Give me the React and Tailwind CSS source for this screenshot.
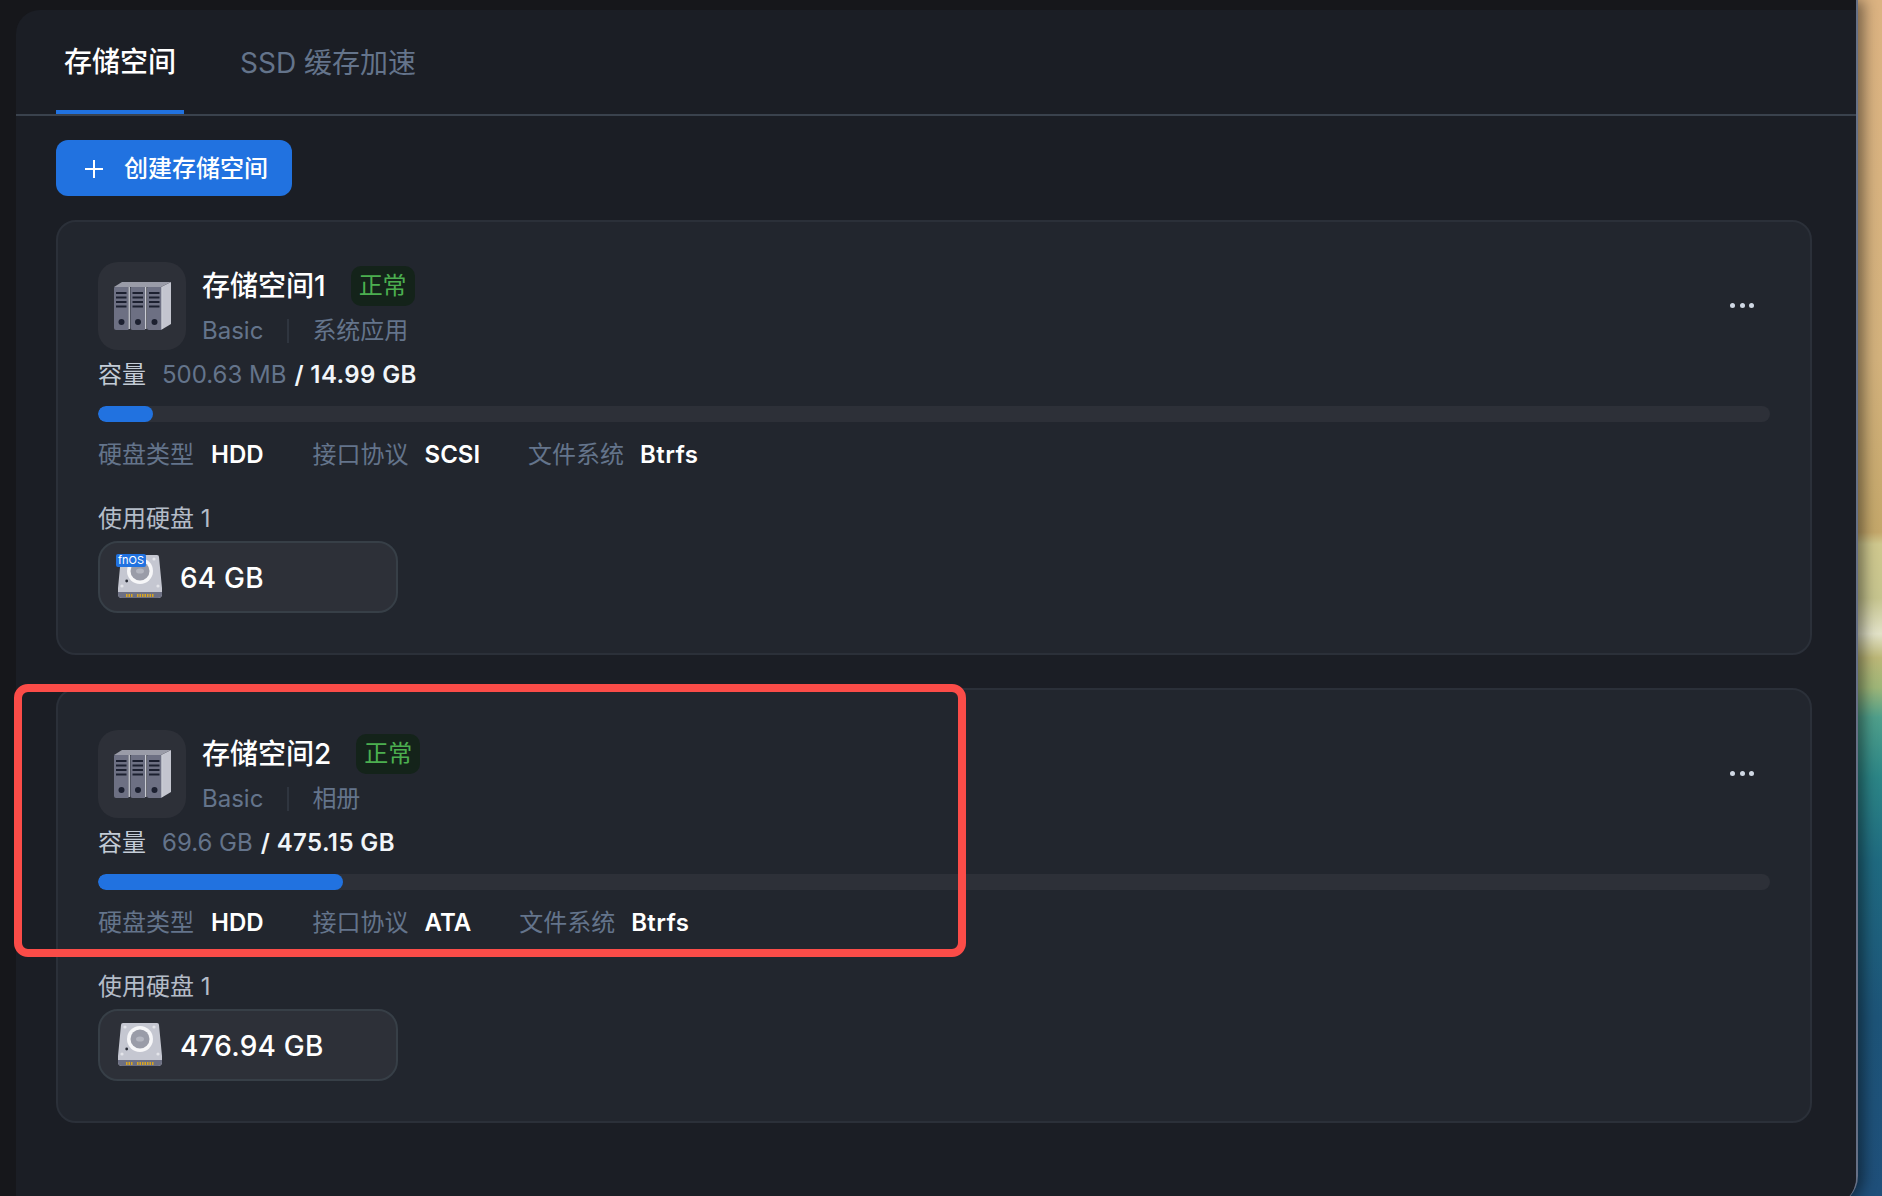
import React from 'react';

const spaces = [
  {
    name: '存储空间1',
    tag: '系统应用',
    used: '500.63 MB',
    total: '14.99 GB',
    percent: 3.3,
    protocol: 'SCSI',
    disk: '64 GB',
    fnos: true,
  },
  {
    name: '存储空间2',
    tag: '相册',
    used: '69.6 GB',
    total: '475.15 GB',
    percent: 14.65,
    protocol: 'ATA',
    disk: '476.94 GB',
    fnos: false,
  },
];

const VolumeIcon = () => (
  <svg width="60" height="52" viewBox="0 0 60 52">
    <path d="M48 6 L58 1 V43 L48 49 Z" fill="#c3c5cf" />
    <path d="M1 6 L9 1 H58 L48 6 Z" fill="#9a9ca8" />
    {[0, 16.5, 33].map((x) => (
      <g key={x} transform={`translate(${x} 0)`}>
        <path d="M2 6 H15.5 V49 H3 Q1 49 1 47 V7 Q1 6 2 6 Z" fill="#6d7083" />
        <rect x="15.5" y="6" width="1.4" height="42" fill="#c9cbd3" />
        <rect x="3" y="11" width="10.5" height="2" fill="#1c2030" />
        <rect x="3" y="15.5" width="10.5" height="2" fill="#1c2030" />
        <rect x="3" y="20" width="10.5" height="2" fill="#1c2030" />
        <rect x="3" y="24.5" width="10.5" height="2" fill="#1c2030" />
        <circle cx="8.5" cy="41" r="3" fill="#1c2030" />
      </g>
    ))}
  </svg>
);

const DiskIcon = () => (
  <svg width="44" height="44" viewBox="0 0 44 44">
    <path d="M5 0 H39 Q41 0 41 2 L44 33 V39 Q44 43 40 43 H4 Q0 43 0 39 V33 L3 2 Q3 0 5 0 Z" fill="#c5c7d1" />
    <path d="M0 37 H44 V39 Q44 43 40 43 H4 Q0 43 0 39 Z" fill="#6d7083" />
    <circle cx="22" cy="16" r="13" fill="#f6f6f8" />
    <circle cx="22" cy="16" r="9.5" fill="#9a9ca8" />
    <ellipse cx="22" cy="16" rx="4" ry="2.6" fill="#b4b6c0" />
    <circle cx="8.7" cy="26" r="1.4" fill="#2a2d38" />
    {[[7, 4], [36, 4], [4, 31], [40, 31]].map(([cx, cy]) => (
      <circle key={cx} cx={cx} cy={cy} r="1.6" fill="#e4e5ea" />
    ))}
    {[8, 10.5, 13, 19, 21.5, 24, 26.5, 29, 31.5, 34].map((x) => (
      <rect key={x} x={x} y="39" width="1.5" height="3" fill="#d9a521" />
    ))}
  </svg>
);

const StorageCard = ({ space }) => (
  <div className="h-[435px] rounded-[20px] border-2 border-[#2b3039] bg-[#22262e] pt-[40px] pl-[40px] pr-[40px]">
    <div className="flex items-center justify-between h-[88px]">
      <div className="flex items-center">
        <div className="w-[88px] h-[88px] rounded-[20px] bg-[#2d3038] flex items-center justify-center pt-[2px] pl-[2px]">
          <VolumeIcon />
        </div>
        <div className="ml-[16px]">
          <div className="flex items-center h-[40px] mt-[2px]">
            <span className="text-[28px] font-medium text-white">{space.name}</span>
            <span className="ml-[25px] w-[64px] h-[40px] rounded-[10px] bg-[#14231a] text-[#4caf50] text-[24px] flex items-center justify-center">
              正常
            </span>
          </div>
          <div className="flex items-center h-[34px] mt-[8px] text-[24px] text-[#64748b]">
            <span>Basic</span>
            <span className="w-[2px] h-[24px] bg-[#2f353f] ml-[24px] mr-[23px]" />
            <span>{space.tag}</span>
          </div>
        </div>
      </div>
      <div className="flex gap-[4.5px] mr-[16px] mt-[-2px]">
        <span className="w-[5px] h-[5px] rounded-full bg-[#d0d8e4]" />
        <span className="w-[5px] h-[5px] rounded-full bg-[#d0d8e4]" />
        <span className="w-[5px] h-[5px] rounded-full bg-[#d0d8e4]" />
      </div>
    </div>

    <div className="flex items-center h-[34px] mt-[8px] text-[24px]">
      <span className="text-[#c3cbd6] mr-[16px]">容量</span>
      <span className="text-[#64748b]">{space.used}</span>
      <span className="text-[#f1f5f9] font-semibold ml-[8px] tracking-[0.4px]">/ {space.total}</span>
    </div>

    <div className="h-[16px] mt-[14px] rounded-[8px] bg-[#2d3038] overflow-hidden">
      <div className="h-full rounded-[8px] bg-[#2172e0]" style={{ width: `${space.percent}%` }} />
    </div>

    <div className="flex items-center h-[34px] mt-[16px] text-[24px]">
      <span className="text-[#64748b] mr-[17px]">硬盘类型</span>
      <span className="text-white font-semibold mr-[49px]">HDD</span>
      <span className="text-[#64748b] mr-[16px]">接口协议</span>
      <span className="text-white font-semibold mr-[48px]">{space.protocol}</span>
      <span className="text-[#64748b] mr-[16px]">文件系统</span>
      <span className="text-white font-semibold tracking-[0.4px]">Btrfs</span>
    </div>

    <div className="h-[34px] mt-[30px] flex items-center text-[24px] text-[#b4bcc8]">使用硬盘 1</div>

    <div className="relative w-[300px] h-[72px] mt-[5px] rounded-[20px] border-2 border-[#373f47] bg-[#2d3038] flex items-center pl-[18px]">
      <DiskIcon />
      {space.fnos && (
        <span className="absolute left-[16px] top-[11px] h-[13px] w-[30px] rounded-[2px] bg-[#2172e0] text-white text-[11px] leading-[13px] text-center">
          fnOS
        </span>
      )}
      <span className="ml-[18px] pt-[2px] text-[28px] font-medium text-white tracking-[0.2px]">{space.disk}</span>
    </div>
  </div>
);

const App = () => {
  return (
    <div
      className="relative h-[1196px] overflow-hidden bg-[linear-gradient(180deg,#dcb382_0%,#d2b17c_30%,#c4a76a_44.5%,#cfc88e_45.5%,#c6c48e_50%,#e2e2c8_53%,#bcb777_55%,#9eb678_57.5%,#4f9f8b_60%,#2c8586_65%,#1f6a80_72%,#1d5478_85%,#1f4f7a_100%)]"
      style={{ fontFamily: 'Inter, "Noto Sans CJK SC", sans-serif' }}
    >
      <div className="w-[1858px] h-[1206px] pt-[10px] pl-[16px] bg-[#16171b] rounded-br-[30px] border-r-2 border-[#667085] shadow-[6px_0_14px_rgba(0,0,0,0.45)]">
        <div className="h-full rounded-tl-[24px] rounded-br-[28px] bg-[#1b1e25]">
          {/* Tabs */}
          <div className="flex h-[106px] px-[40px] border-b-2 border-[#3a424d]">
            <div className="w-[128px] h-[104px] border-b-4 border-[#2172e0] flex items-center justify-center text-[28px] font-medium text-white pt-[4px]">
              存储空间
            </div>
            <div className="h-[104px] ml-[56px] flex items-center text-[28px] text-[#64748b] pt-[2px]">
              SSD 缓存加速
            </div>
          </div>

          <div className="pl-[40px] pr-[44px] pt-[24px]">
            <button className="w-[236px] h-[56px] rounded-[12px] bg-[#2172e0] text-white text-[24px] font-medium flex items-center pl-[28px] pt-[1px]">
              <svg width="20" height="20" viewBox="0 0 20 20" className="mr-[20px]">
                <path d="M10 1 V19 M1 10 H19" stroke="#fff" strokeWidth="2" />
              </svg>
              创建存储空间
            </button>

            <div className="flex flex-col gap-[33px] mt-[24px]">
              {spaces.map((space) => (
                <StorageCard key={space.name} space={space} />
              ))}
            </div>
          </div>
        </div>
      </div>

      {/* red annotation box */}
      <div className="absolute left-[14px] top-[684px] w-[952px] h-[273px] rounded-[14px] border-[8px] border-[#fb4c48]" />
    </div>
  );
};

export default App;
